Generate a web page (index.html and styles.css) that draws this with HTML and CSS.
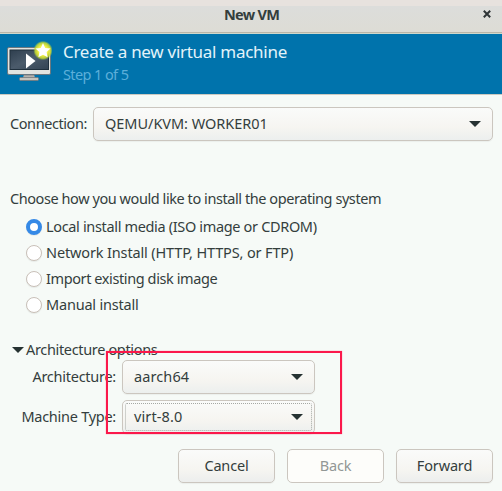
FILE: index.html
```html
<!DOCTYPE html>
<html lang="en">
<head>
<meta charset="utf-8">
<title>New VM</title>
<link rel="stylesheet" href="styles.css">
</head>
<body>
<main class="window">
  <header class="titlebar">
    <h1 class="title">New VM</h1>
    <svg class="close" viewBox="0 0 8 8"><path d="M.8.8 7.2 7.2M7.2.8.8 7.2"/></svg>
  </header>
  <section class="banner">
    <svg class="vm-icon" viewBox="0 0 46 42">
      <defs>
        <linearGradient id="screen" x1="0" y1="0" x2="1" y2="1"><stop offset="0" stop-color="#2e3e4e"/><stop offset=".5" stop-color="#4b5b6b"/><stop offset="1" stop-color="#334353"/></linearGradient>
        <radialGradient id="glow"><stop offset="0" stop-color="#fffcb0"/><stop offset=".5" stop-color="#f0f044"/><stop offset=".8" stop-color="#c9dc32" stop-opacity=".85"/><stop offset="1" stop-color="#8fc44a" stop-opacity="0"/></radialGradient>
        <linearGradient id="stand" x1="0" y1="0" x2="0" y2="1"><stop offset="0" stop-color="#777"/><stop offset="1" stop-color="#d8d8d2"/></linearGradient>
      </defs>
      <path d="M18 33h10l1 4H17z" fill="url(#stand)"/>
      <rect x="13.500" y="36.500" width="19" height="3" rx="1" fill="#c4c4be" stroke="#73777a" stroke-width=".8"/>
      <rect x="1.500" y="6.500" width="43" height="27" rx="1.500" fill="#e2e4e0" stroke="#6b7880"/>
      <rect x="4" y="9" width="38.500" height="19.500" fill="url(#screen)" stroke="#20303d"/>
      <path d="M20 12.500v15l9.500-7.500z" fill="#fff"/>
      <circle cx="37" cy="9.500" r="9.800" fill="url(#glow)"/>
      <path d="m37 2 2.200 4.900 5.300.6-3.900 3.600 1 5.200-4.600-2.600-4.600 2.600 1-5.200-3.900-3.600 5.300-.6z" fill="#fff"/>
    </svg>
    <div class="heading">
      <h2 class="task">Create a new virtual machine</h2>
      <p class="step">Step 1 of 5</p>
    </div>
  </section>
  <section class="content">
    <div class="connection">
      <span class="label conn">Connection:</span>
      <div class="combo"><span class="server">QEMU/KVM: WORKER01</span><svg class="arrow" viewBox="0 0 12 6"><path d="M0 0h12L6 6z"/></svg></div>
    </div>
    <p class="question">Choose how you would like to install the operating system</p>
    <div class="choices">
      <div class="choice"><i class="radio on"></i><span>Local install media (ISO image or CDROM)</span></div>
      <div class="choice network"><i class="radio"></i><span>Network Install (HTTP, HTTPS, or FTP)</span></div>
      <div class="choice import"><i class="radio"></i><span>Import existing disk image</span></div>
      <div class="choice manual"><i class="radio"></i><span>Manual install</span></div>
    </div>
    <div class="expander"><svg class="arrow" viewBox="0 0 12 6"><path d="M0 0h12L6 6z"/></svg><span>Architecture options</span></div>
    <div class="options">
      <span class="label">Architecture:</span>
      <div class="combo"><span>aarch64</span><svg class="arrow" viewBox="0 0 12 6"><path d="M0 0h12L6 6z"/></svg></div>
      <span class="label">Machine Type:</span>
      <div class="combo focused"><span>virt-8.0</span><svg class="arrow" viewBox="0 0 12 6"><path d="M0 0h12L6 6z"/></svg></div>
    </div>
  </section>
  <footer class="actions">
    <div class="button"><span>Cancel</span></div>
    <div class="button disabled"><span>Back</span></div>
    <div class="button"><span>Forward</span></div>
  </footer>
  <div class="highlight"></div>
</main>
</body>
</html>
```
FILE: styles.css
```css
* { box-sizing: border-box; }
body { margin: 0; font: 14.5px/20px "Noto Sans", sans-serif; color: #343e3d; letter-spacing: -.34px; }
h1, h2, p { margin: 0; font-weight: 400; }
span, p, h1, h2 { white-space: nowrap; }
span { padding-bottom: 2px; }
.window { position: relative; width: 502px; height: 491px; overflow: hidden; background: #f6faf7; display: flex; flex-direction: column; }
.titlebar { height: 34px; flex: none; display: grid; grid-template-columns: 1fr auto 1fr; align-items: center; padding: 0 11px 6px 12px; background: linear-gradient(#e7e2de 0 6px, #dcdddb 6px, #dddcd5 32px, #b9b6a9 32px 33px, #cfd8cc 33px); }
.title { grid-column: 2; font-size: 14.5px; line-height: 20px; font-weight: 700; letter-spacing: -.7px; }
.close { width: 8px; height: 8px; justify-self: end; fill: none; stroke: #2e3436; stroke-width: 2; }
.banner { height: 61px; flex: none; display: flex; padding-left: 6px; background: #0073ac; border-bottom: 1px solid #cbc9c0; }
.vm-icon { width: 46px; height: 42px; margin-top: 7px; }
.heading { padding: 6px 0 0 11px; }
.task { font-size: 17px; line-height: 24px; color: #e3f3fa; letter-spacing: -.28px; }
.step { color: #5cafda; line-height: 20px; letter-spacing: -.6px; }
.content { flex: none; height: 343px; padding: 12px 9px 0 10px; }
.connection { display: flex; align-items: center; gap: 6px; }
.label { text-align: right; letter-spacing: -.26px; }
.conn { width: 77px; text-align: left; letter-spacing: -.42px; }
.combo { height: 34px; flex: 1; display: flex; align-items: center; justify-content: space-between; padding: 0 11px; border: 1px solid #cbc6bf; border-radius: 5px; background: linear-gradient(#fafbfa, #f6f5f1 60%, #ecefee); box-shadow: 0 1px 1px #0000000c; letter-spacing: .1px; }
.server { letter-spacing: -.03px; }
.arrow { width: 12px; height: 6px; fill: #263232; flex: none; }
.question { margin-top: 47px; letter-spacing: -.43px; }
.choices { padding: 6px 0 0 16px; }
.choice { height: 26px; display: flex; align-items: center; gap: 4px; }
.network { letter-spacing: -.14px; }
.import { letter-spacing: -.4px; }
.manual { letter-spacing: -.2px; }
.radio { width: 16px; height: 16px; flex: none; border: 1px solid #c9c0b8; border-radius: 50%; background: #fff; box-shadow: 0 1px 1px #00000010; }
.radio.on { border: 4px solid #3589e6; }
.expander { height: 20px; display: flex; align-items: center; gap: 2px; margin-top: 22px; padding-left: 2px; }
.options { display: grid; grid-template-columns: 106px 193px; gap: 6px; align-items: center; }
.focused { outline: 1px dotted #a5a9a4; outline-offset: -4px; }
.actions { display: flex; gap: 12px; justify-content: flex-end; padding: 11px 9px 0 0; }
.button { width: 97px; height: 34px; display: flex; align-items: center; justify-content: center; border: 1px solid #cbc6bf; border-radius: 5px; background: linear-gradient(#fafbfa, #f6f5f1 60%, #eceeed); box-shadow: 0 1px 1px #0000000c; letter-spacing: -.15px; }
.disabled { background: #fdfdfa; color: #929795; box-shadow: none; }
.highlight { position: absolute; left: 106px; top: 351px; width: 236px; height: 83px; border: 2px solid #fb184b; box-shadow: 0 0 1px #fb184b90; }
```
